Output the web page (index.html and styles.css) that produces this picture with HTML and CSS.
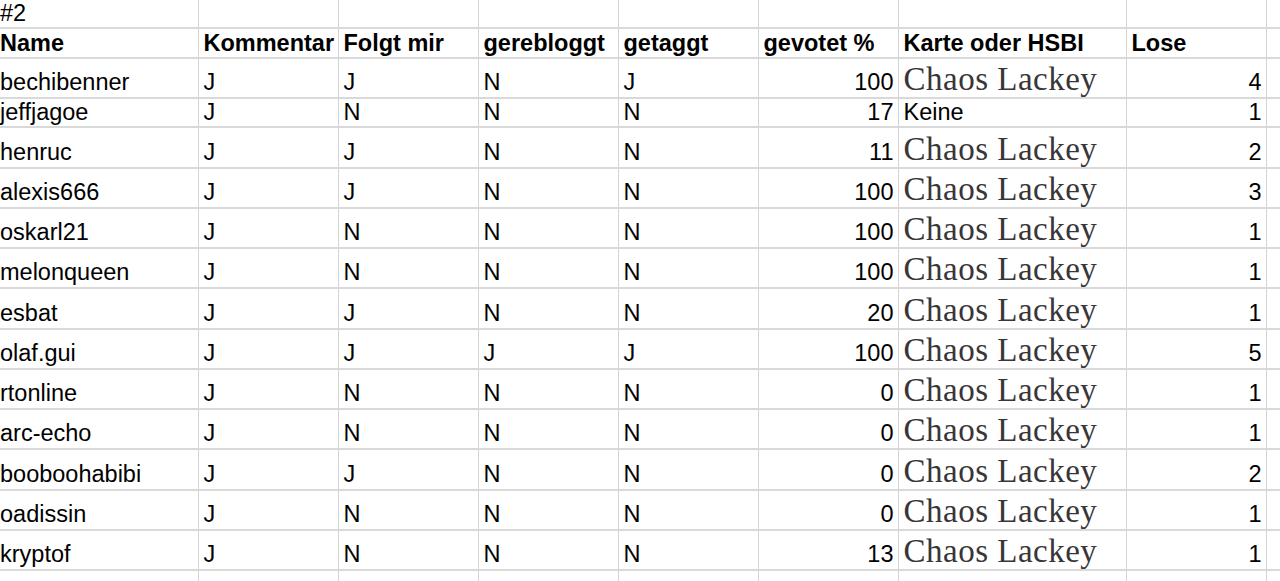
FILE: index.html
```html
<!DOCTYPE html>
<html lang="de">
<head>
<meta charset="utf-8">
<title>#2</title>
<link rel="stylesheet" href="styles.css">
</head>
<body>
<table class="sheet">
  <colgroup>
    <col class="c-name"><col class="c-std"><col class="c-std"><col class="c-std"><col class="c-std"><col class="c-std"><col class="c-wide"><col class="c-std"><col class="c-rest">
  </colgroup>
  <tbody>
    <tr class="r-title"><td>#2</td><td></td><td></td><td></td><td></td><td></td><td></td><td></td><td></td></tr>
    <tr class="r-head"><th>Name</th><th>Kommentar</th><th>Folgt mir</th><th>gerebloggt</th><th>getaggt</th><th>gevotet %</th><th>Karte oder HSBI</th><th>Lose</th><th></th></tr>
    <tr class="r-tall"><td>bechibenner</td><td>J</td><td>J</td><td>N</td><td>J</td><td class="num">100</td><td class="card">Chaos Lackey</td><td class="num">4</td><td></td></tr>
    <tr class="r-short"><td>jeffjagoe</td><td>J</td><td>N</td><td>N</td><td>N</td><td class="num">17</td><td>Keine</td><td class="num">1</td><td></td></tr>
    <tr class="r-tall"><td>henruc</td><td>J</td><td>J</td><td>N</td><td>N</td><td class="num">11</td><td class="card">Chaos Lackey</td><td class="num">2</td><td></td></tr>
    <tr class="r-tall"><td>alexis666</td><td>J</td><td>J</td><td>N</td><td>N</td><td class="num">100</td><td class="card">Chaos Lackey</td><td class="num">3</td><td></td></tr>
    <tr class="r-tall"><td>oskarl21</td><td>J</td><td>N</td><td>N</td><td>N</td><td class="num">100</td><td class="card">Chaos Lackey</td><td class="num">1</td><td></td></tr>
    <tr class="r-tall"><td>melonqueen</td><td>J</td><td>N</td><td>N</td><td>N</td><td class="num">100</td><td class="card">Chaos Lackey</td><td class="num">1</td><td></td></tr>
    <tr class="r-tall"><td>esbat</td><td>J</td><td>J</td><td>N</td><td>N</td><td class="num">20</td><td class="card">Chaos Lackey</td><td class="num">1</td><td></td></tr>
    <tr class="r-tall"><td>olaf.gui</td><td>J</td><td>J</td><td>J</td><td>J</td><td class="num">100</td><td class="card">Chaos Lackey</td><td class="num">5</td><td></td></tr>
    <tr class="r-tall"><td>rtonline</td><td>J</td><td>N</td><td>N</td><td>N</td><td class="num">0</td><td class="card">Chaos Lackey</td><td class="num">1</td><td></td></tr>
    <tr class="r-tall"><td>arc-echo</td><td>J</td><td>N</td><td>N</td><td>N</td><td class="num">0</td><td class="card">Chaos Lackey</td><td class="num">1</td><td></td></tr>
    <tr class="r-tall"><td>booboohabibi</td><td>J</td><td>J</td><td>N</td><td>N</td><td class="num">0</td><td class="card">Chaos Lackey</td><td class="num">2</td><td></td></tr>
    <tr class="r-tall"><td>oadissin</td><td>J</td><td>N</td><td>N</td><td>N</td><td class="num">0</td><td class="card">Chaos Lackey</td><td class="num">1</td><td></td></tr>
    <tr class="r-tall"><td>kryptof</td><td>J</td><td>N</td><td>N</td><td>N</td><td class="num">13</td><td class="card">Chaos Lackey</td><td class="num">1</td><td></td></tr>
    <tr class="r-tall"><td></td><td></td><td></td><td></td><td></td><td></td><td></td><td></td><td></td></tr>
  </tbody>
</table>
</body>
</html>
```

FILE: styles.css
```css
html, body {
  margin: 0;
  padding: 0;
  background: #ffffff;
  overflow: hidden;
}

.sheet {
  border-collapse: collapse;
  table-layout: fixed;
  width: 1280px;
  font-family: "Liberation Sans", Arial, sans-serif;
  font-size: 23.5px;
  color: #000000;
}

.c-name { width: 198px; }
.c-std { width: 140px; }
.c-wide { width: 228px; }
.c-rest { width: 14px; }

.sheet td,
.sheet th {
  border-right: 1px solid #d4d4d4;
  border-bottom: 2px solid #d9d9d9;
  padding: 0 5px 1px 5px;
  vertical-align: bottom;
  text-align: left;
  white-space: nowrap;
  overflow: hidden;
  line-height: 27px;
}

.sheet td:first-child,
.sheet th:first-child {
  padding-left: 0;
}

.sheet th {
  font-weight: bold;
}

.r-title { height: 27px; }
.r-title td { padding-bottom: 0; }
.r-head { height: 30px; }
.r-head th { padding-bottom: 0; }
.r-short { height: 29px; }
.r-short td { padding-bottom: 0; }
.r-tall { height: 40.25px; }

.sheet .num {
  text-align: right;
  padding-right: 4px;
}

.sheet .card {
  font-family: "Liberation Serif", "Times New Roman", serif;
  font-size: 33px;
  letter-spacing: 0.5px;
  color: #3a3537;
  line-height: 34px;
  padding-bottom: 1px;
}
```
